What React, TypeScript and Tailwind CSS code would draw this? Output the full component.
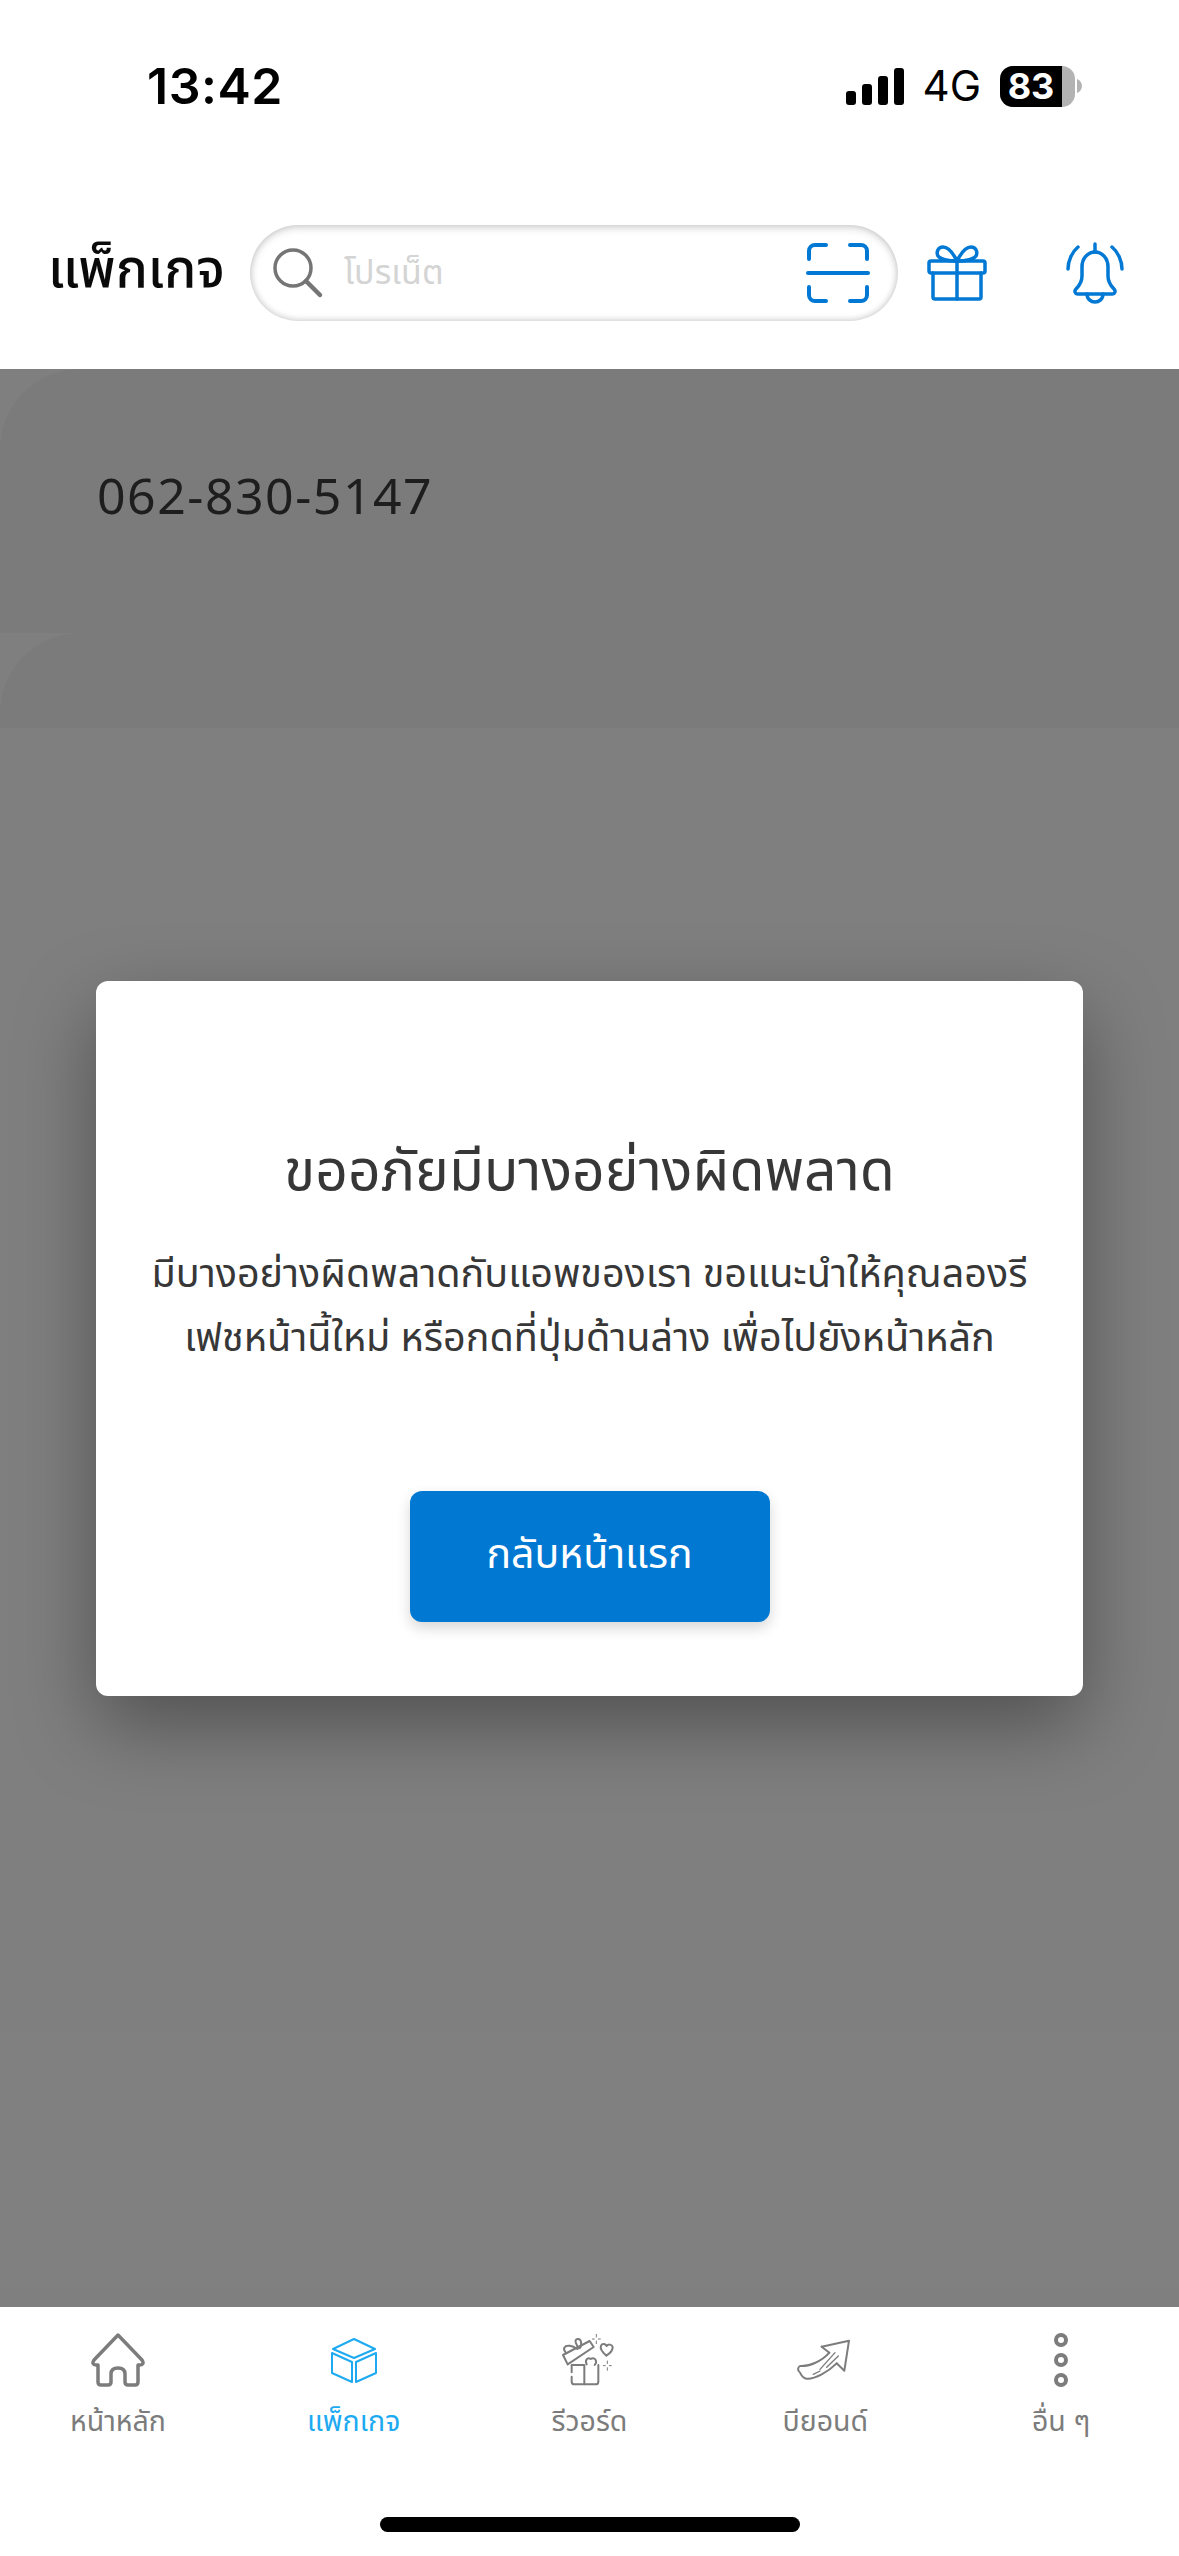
const font = "font-['Noto_Sans','Noto_Sans_Thai','Liberation_Sans',sans-serif]";

function StatusBar() {
  return (
    <div className="flex h-[200px] items-start justify-between pl-[147px] pr-[97px] pt-[57px] text-black">
      <span className="font-['Inter',sans-serif] text-[50px] leading-[58px] font-semibold tracking-[0.5px]">13:42</span>
      <div className="flex items-center gap-[19px] pt-[8px]">
        <svg width="58" height="37" viewBox="0 0 58 37" fill="currentColor">
          <rect x="0" y="23" width="10" height="14" rx="3" />
          <rect x="16" y="16" width="10" height="21" rx="3" />
          <rect x="32" y="8" width="10" height="29" rx="3" />
          <rect x="48" y="0" width="10" height="37" rx="3" />
        </svg>
        <span className="font-['Inter',sans-serif] text-[42px] leading-[42px]">4G</span>
        <div className="flex items-center gap-[2px]">
          <div className="relative flex h-[41px] w-[75px] items-center overflow-hidden rounded-[13px] bg-[#b3b3b3]">
            <div className="flex h-full w-[62px] items-center justify-center bg-black font-['Inter',sans-serif] text-[36px] font-bold text-white">83</div>
          </div>
          <svg width="5" height="14" viewBox="0 0 5 14" fill="#b3b3b3"><path d="M0 0c3 1 5 4 5 7s-2 6-5 7z" /></svg>
        </div>
      </div>
    </div>
  );
}

function Header() {
  return (
    <div className="flex h-[169px] items-start pl-[48px] pt-[25px]">
      <h1 className="w-[202px] pt-[6px] text-[53px] leading-[72px] font-medium text-[#0a0a0a]">แพ็กเกจ</h1>
      <div className="flex h-[96px] w-[648px] items-center rounded-[48px] bg-white pl-[22px] pr-[28px] shadow-[inset_0_3px_8px_rgba(0,0,0,0.15),inset_0_-2px_7px_rgba(0,0,0,0.09),inset_2px_0_7px_rgba(0,0,0,0.04),inset_-2px_0_7px_rgba(0,0,0,0.04)]">
        <svg width="52" height="52" viewBox="0 0 52 52" fill="none" stroke="#757575" strokeWidth="3.500" strokeLinecap="round">
          <circle cx="21" cy="21" r="18" />
          <path d="M34 34l14 14" strokeWidth="4.500" />
        </svg>
        <span className="ml-[20px] flex-1 pb-[3px] text-[34px] text-[#d4d4d4]">โปรเน็ต</span>
        <svg width="64" height="62" viewBox="0 0 64 62" fill="none" stroke="#0078d4" strokeWidth="4" strokeLinecap="round">
          <path d="M20 3H9a6 6 0 0 0-6 6v8" />
          <path d="M44 3h11a6 6 0 0 1 6 6v8" />
          <path d="M20 59H9a6 6 0 0 1-6-6v-8" />
          <path d="M44 59h11a6 6 0 0 0 6-6v-8" />
          <path d="M2 31h60" />
        </svg>
      </div>
      <div className="ml-[29px] mt-[20px]">
        <svg width="60" height="56" viewBox="0 0 60 56" fill="none" stroke="#0078d4" strokeWidth="3.500" strokeLinecap="round" strokeLinejoin="round">
          <rect x="2" y="16" width="56" height="12" rx="2" />
          <path d="M6 28v24a2 2 0 0 0 2 2h44a2 2 0 0 0 2-2V28" />
          <path d="M30 16v38" />
          <path d="M30 16C26 8 22 2 16 2c-5 0-7 5-5 9 2 3 10 5 19 5z" />
          <path d="M30 16c4-8 8-14 14-14 5 0 7 5 5 9-2 3-10 5-19 5z" />
        </svg>
      </div>
      <div className="ml-[79px] mt-[17px]">
        <svg width="58" height="62" viewBox="0 0 58 62" fill="none" stroke="#0078d4" strokeWidth="3.500" strokeLinecap="round" strokeLinejoin="round">
          <path d="M29 2v8" />
          <path d="M12 5C6 10 2 19 2 27" />
          <path d="M46 5c6 5 10 14 10 22" />
          <path d="M12 52h34c3 0 4-3 2-5-4-4-6-7-6-13v-9c0-9-6-15-13-15s-13 6-13 15v9c0 6-2 9-6 13-2 2-1 5 2 5z" />
          <path d="M21 52c0 5 4 8 8 8s8-3 8-8" />
        </svg>
      </div>
    </div>
  );
}

function ErrorModal() {
  return (
    <div className="absolute inset-0 flex items-center justify-center bg-black/50">
      <div className="flex h-[715px] w-[987px] flex-col items-center rounded-[12px] bg-white pt-[151px] shadow-[0_30px_80px_rgba(0,0,0,0.36)]">
        <h2 className="text-[57px] leading-[72px] text-[#373737]">ขออภัยมีบางอย่างผิดพลาด</h2>
        <p className="mt-[36px] text-center text-[39.5px] leading-[64px] text-[#373737]">
          มีบางอย่างผิดพลาดกับแอพของเรา ขอแนะนำให้คุณลองรี
          <br />
          เฟชหน้านี้ใหม่ หรือกดที่ปุ่มด้านล่าง เพื่อไปยังหน้าหลัก
        </p>
        <button className="mt-[123px] h-[131px] w-[360px] rounded-[12px] bg-[#0179d2] pb-[6px] text-[41px] text-white shadow-[0_6px_14px_rgba(0,0,0,0.16)]">
          กลับหน้าแรก
        </button>
      </div>
    </div>
  );
}

function HomeIcon() {
  return (
    <svg width="54" height="54" viewBox="0 0 54 54" fill="none" stroke="#7c7c7c" strokeWidth="3.500" strokeLinejoin="round" strokeLinecap="round">
      <path d="M27 2L51 27c2 3 1 5-2 5h-2v17c0 2-1 3-3 3h-7c-2 0-3-1-3-3V41c0-4-2-6-7-6s-7 2-7 6v8c0 2-1 3-3 3h-7c-2 0-3-1-3-3V32H5c-3 0-4-2-2-5z" />
    </svg>
  );
}

function BoxIcon() {
  return (
    <svg width="46" height="45" viewBox="0 0 46 45" fill="none" stroke="#1eaaf1" strokeWidth="2" strokeLinejoin="round">
      <path d="M23 1L44 11 23 20 2 11z" />
      <path d="M1 15l20 9v20L1 35z" />
      <path d="M45 15L25 24v20l20-9z" />
    </svg>
  );
}

function RewardIcon() {
  return (
    <svg width="80" height="70" viewBox="0 0 240 210" fill="none" stroke="#7c7c7c" strokeWidth="6" strokeLinejoin="round" strokeLinecap="round">
      <path d="M68 122v20" />
      <path d="M68 155v15q0 8 8 8h64q8 0 8-8v-50" />
      <path d="M68 120h38M106 120v58" />
      <path d="M42 90L122 48l12 18L56 118z" />
      <path d="M90 70C82 60 74 45 85 42c12-2 14 14 9 26" />
      <path d="M85 72C70 62 52 58 46 68c-2 5 0 10 4 14" />
      <path d="M113 118c-6-12 2-22 12-16 8-6 18 0 16 12l-4 6" />
      <path d="M172 92c-12-10-20-20-16-30 4-8 14-6 17 1 4-6 16-6 18 3 1 10-10 20-19 26z" />
      <path d="M142 28v8M142 48v8M130 42h6M148 42h6M175 108v8M175 128v8M163 122h6M181 122h6" strokeWidth="3" />
    </svg>
  );
}

function BeyondIcon() {
  return (
    <svg width="80" height="60" viewBox="0 0 240 180" fill="none" stroke="#7c7c7c" strokeWidth="6" strokeLinejoin="round" strokeLinecap="round">
      <path d="M110 50L192 32l-14 90-23-22" />
      <path d="M110 50l23 18" />
      <path d="M133 68C110 95 70 110 45 108c-7 4-7 12-3 16" />
      <path d="M155 100c-25 25-65 48-90 46-10 0-15-8-20-18" />
      <path d="M150 68l-45 50M160 78l-35 34M85 133l20-10" strokeWidth="4" />
    </svg>
  );
}

function MoreIcon() {
  return (
    <svg width="14" height="54" viewBox="0 0 14 54" fill="none" stroke="#7c7c7c" strokeWidth="4">
      <circle cx="7" cy="7" r="5" />
      <circle cx="7" cy="27" r="5" />
      <circle cx="7" cy="47" r="5" />
    </svg>
  );
}

const tabs = [
  { label: "หน้าหลัก", icon: <HomeIcon /> },
  { label: "แพ็กเกจ", icon: <BoxIcon />, active: true },
  { label: "รีวอร์ด", icon: <RewardIcon /> },
  { label: "บียอนด์", icon: <BeyondIcon /> },
  { label: "อื่น ๆ", icon: <MoreIcon /> },
];

function BottomNav() {
  return (
    <div className="relative h-[249px] bg-white">
      <div className="grid grid-cols-5 pt-[26px]">
        {tabs.map((tab) => (
          <div key={tab.label} className="flex flex-col items-center">
            <div className="flex h-[54px] items-center justify-center">{tab.icon}</div>
            <span className={`mt-[11px] text-[28.500px] leading-[44px] ${tab.active ? "text-[#1eaaf1]" : "text-[#7c7c7c]"}`}>{tab.label}</span>
          </div>
        ))}
      </div>
      <div className="absolute bottom-[24px] left-[380px] h-[15px] w-[420px] rounded-full bg-black" />
    </div>
  );
}

export default function App() {
  return (
    <div className={`flex h-[2556px] w-[1179px] flex-col overflow-hidden bg-white ${font}`}>
      <StatusBar />
      <Header />
      <main className="relative flex-1 bg-white">
        <div className="h-[264px] rounded-tl-[80px] bg-[#f7f7f7] pl-[97px] pt-[96px]">
          <span className="text-[50px] leading-[60px] tracking-[1.500px] text-[#3c3c3c]">062-830-5147</span>
        </div>
        <div className="h-[95px] rounded-tl-[80px] bg-[#f7f7f7]" />
        <ErrorModal />
      </main>
      <BottomNav />
    </div>
  );
}
